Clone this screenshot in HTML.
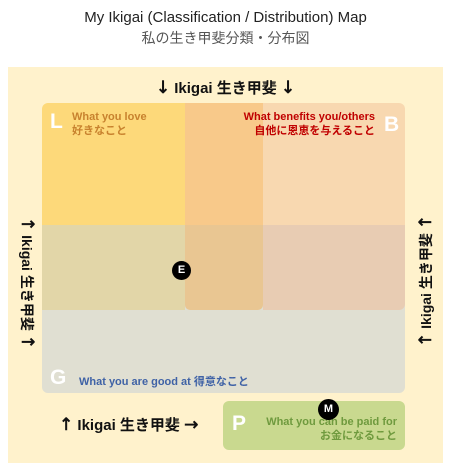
<!DOCTYPE html>
<html><head><meta charset="utf-8"><style>
body{margin:0;width:451px;height:472px;background:#fff;position:relative;overflow:hidden;font-family:"Liberation Sans","Noto Sans CJK JP",sans-serif}
.a{position:absolute}
.t{white-space:nowrap}
.ar{font-family:"DejaVu Sans",sans-serif;font-size:17px;font-weight:normal;-webkit-text-stroke:0.6px #111}
</style></head><body>
<div class="a t" style="left:0;width:451px;top:9px;text-align:center;font-size:15px;color:#222">My Ikigai (Classification / Distribution) Map</div>
<div class="a t" style="left:0;width:451px;top:28px;text-align:center;font-size:14px;color:#555">私の生き甲斐分類・分布図</div>
<div class="a" style="left:8px;top:67px;width:435px;height:396px;background:#fff2cc"></div>
<div class="a t" style="left:0;width:451px;top:77px;text-align:center;font-size:15px;font-weight:bold;color:#111"><span class="ar">↓</span> Ikigai 生き甲斐 <span class="ar">↓</span></div>
<div class="a" style="left:42px;top:225px;width:363px;height:168px;background:#e0dfd2;border-radius:6px"></div>
<div class="a" style="left:42px;top:103px;width:143px;height:122px;background:#fdd97a;border-radius:6px 0 0 0"></div>
<div class="a" style="left:185px;top:103px;width:78px;height:122px;background:#f8c98a"></div>
<div class="a" style="left:263px;top:103px;width:142px;height:122px;background:#f8d8b0;border-radius:0 6px 0 0"></div>
<div class="a" style="left:42px;top:225px;width:143px;height:85px;background:#e2d6a8"></div>
<div class="a" style="left:185px;top:225px;width:78px;height:85px;background:#e9c692;border-radius:0 0 5px 5px"></div>
<div class="a" style="left:263px;top:225px;width:142px;height:85px;background:#e8ccb3;border-radius:0 0 6px 0"></div>
<div class="a t" style="left:50px;top:110px;font-size:21px;font-weight:bold;color:#fff">L</div>
<div class="a t" style="left:72px;top:110px;font-size:11px;font-weight:bold;color:#c8822e;line-height:14px">What you love<br>好きなこと</div>
<div class="a t" style="right:76px;top:110px;font-size:11px;font-weight:bold;color:#c00000;line-height:14px;text-align:right">What benefits you/others<br>自他に恩恵を与えること</div>
<div class="a t" style="left:384px;top:113px;font-size:21px;font-weight:bold;color:#fff">B</div>
<div class="a t" style="left:50px;top:366px;font-size:21px;font-weight:bold;color:#fff">G</div>
<div class="a t" style="left:79px;top:373px;font-size:11px;font-weight:bold;color:#3f62a6">What you are good at 得意なこと</div>
<div class="a" style="left:172px;top:261px;width:19px;height:19px;border-radius:50%;background:#000;color:#fff;font-size:11px;font-weight:bold;text-align:center;line-height:19px">E</div>
<div class="a" style="left:223px;top:401px;width:182px;height:49px;background:#c9d98f;border-radius:6px"></div>
<div class="a t" style="left:232px;top:412px;font-size:21px;font-weight:bold;color:#fff">P</div>
<div class="a t" style="right:54px;top:415px;font-size:11px;font-weight:bold;color:#6f9a3e;line-height:14px;text-align:right">What you can be paid for<br>お金になること</div>
<div class="a" style="left:318px;top:399px;width:21px;height:21px;border-radius:50%;background:#000;color:#fff;font-size:11px;font-weight:bold;text-align:center;line-height:21px">M</div>
<div class="a t" style="left:59px;top:414px;font-size:15px;font-weight:bold;color:#111"><span class="ar">↑</span> Ikigai 生き甲斐 <span class="ar">→</span></div>
<div class="a t" style="left:27px;top:283px;transform:translate(-50%,-50%) rotate(90deg);font-size:14px;font-weight:bold;color:#111"><span class="ar">↑</span> Ikigai 生き甲斐 <span class="ar">↑</span></div>
<div class="a t" style="left:426px;top:281px;transform:translate(-50%,-50%) rotate(-90deg);font-size:14px;font-weight:bold;color:#111"><span class="ar">↑</span> Ikigai 生き甲斐 <span class="ar">↑</span></div>
</body></html>
